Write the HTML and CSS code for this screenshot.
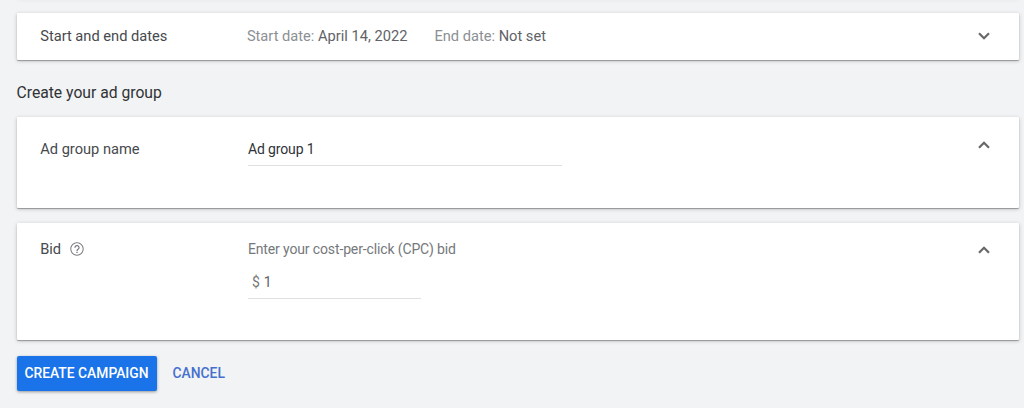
FILE: index.html
```html
<!DOCTYPE html>
<html lang="en">
<head>
    <meta charset="UTF-8">
    <meta name="viewport" content="width=device-width, initial-scale=1.0">
    <title>Create your ad group</title>
    <link rel="stylesheet" href="styles.css">
</head>
<body>

    <!-- Previous panel, scrolled out of view -->
    <div class="panel panel-prev"></div>

    <!-- Start and end dates -->
    <section class="panel panel-dates">
        <div class="label">Start and end dates</div>
        <div class="content dates">
            <span class="start">Start date: <b>April 14, 2022</b></span>
            <span class="end">End date: <b>Not set</b></span>
        </div>
        <svg class="chevron" viewBox="0 0 12 8"><path d="M1 1.2l5 5 5-5"/></svg>
    </section>

    <h2>Create your ad group</h2>

    <!-- Ad group name -->
    <section class="panel panel-name">
        <div class="label">Ad group name</div>
        <div class="content">
            <div class="field field-name">Ad group 1</div>
        </div>
        <svg class="chevron" viewBox="0 0 12 8"><path d="M1 6.8l5-5 5 5"/></svg>
    </section>

    <!-- Bid -->
    <section class="panel panel-bid">
        <div class="label">
            <span>Bid</span>
            <svg class="help" viewBox="0 0 24 24"><path d="M11 18h2v-2h-2v2zm1-16C6.480 2 2 6.480 2 12s4.480 10 10 10 10-4.480 10-10S17.520 2 12 2zm0 18.500c-4.690 0-8.500-3.810-8.500-8.500S7.310 3.500 12 3.500s8.500 3.810 8.500 8.500-3.810 8.500-8.500 8.500zM12 6c-2.210 0-4 1.790-4 4h1.800c0-1.210.99-2.200 2.200-2.200s2.200.99 2.200 2.200c0 2-3.100 1.750-3.100 5h1.800c0-2.250 3.100-2.500 3.100-5 0-2.210-1.790-4-4-4z"/></svg>
        </div>
        <div class="content">
            <div class="hint">Enter your cost-per-click (CPC) bid</div>
            <div class="field field-bid"><span class="currency">$</span>1</div>
        </div>
        <svg class="chevron" viewBox="0 0 12 8"><path d="M1 6.8l5-5 5 5"/></svg>
    </section>

    <!-- Actions -->
    <div class="actions">
        <button class="btn btn-primary">CREATE CAMPAIGN</button>
        <button class="btn btn-text">CANCEL</button>
    </div>

</body>
</html>
```
FILE: styles.css
```css
* {
    box-sizing: border-box;
}
body {
    margin: 0;
    padding: 0 5px 0 16.5px;
    height: 408px;
    overflow: hidden;
    background: #f1f3f4;
    color: #46494d;
    font-family: Roboto, "Liberation Sans", sans-serif;
    font-size: 14.65px;
    line-height: 20px;
}

/* Panels */
.panel {
    display: flex;
    align-items: flex-start;
    padding: 0 29px 0 23.7px;
    background: #fff;
    border-radius: 1px;
    box-shadow: 0 1px 1px rgba(0, 0, 0, .3), 0 1px 4px rgba(0, 0, 0, .2);
}
.panel-prev {
    height: 1px;
    margin-top: -3px;
    margin-bottom: 15px;
}
.panel-dates {
    height: 47px;
    padding-bottom: 1px;
    align-items: center;
}
.panel-name {
    height: 91px;
    padding-top: 22px;
}
.panel-bid {
    height: 117px;
    margin-top: 15px;
    padding-top: 16px;
}
.label {
    display: flex;
    align-items: center;
    gap: 8px;
    width: 207.7px;
}
.content {
    flex: 1;
}
.chevron {
    width: 12px;
    height: 8px;
    margin-top: 2px;
    fill: none;
    stroke: #686868;
    stroke-width: 2.2;
}
.panel-dates .chevron {
    margin-top: 0;
}
.panel-bid .chevron {
    margin-top: 7px;
}

/* Dates */
.dates {
    display: flex;
    gap: 27px;
    margin-left: -1px;
    color: #8c8f93;
}
.dates b {
    font-weight: 400;
    color: #5f6368;
}

h2 {
    margin: 23px 0 14px;
    color: #303236;
    font-size: 15.7px;
    font-weight: 400;
    line-height: 20px;
}

/* Fields */
.field,
.hint {
    font-size: 14px;
    letter-spacing: -.13px;
}
.field {
    border-bottom: 1px solid #e0e0e0;
    line-height: 22px;
}
.field-name {
    width: 314px;
    height: 28px;
    margin-top: -1px;
    color: #303236;
}
.hint {
    color: #75787c;
}
.field-bid {
    width: 173px;
    height: 28px;
    margin-top: 12px;
    padding-left: 4px;
    color: #5f6368;
}
.currency {
    margin-right: 4px;
    color: #75787c;
}
.help {
    width: 16px;
    height: 16px;
    fill: #75787c;
}

/* Buttons */
.actions {
    display: flex;
    gap: 16px;
    margin-top: 16px;
}
.btn {
    height: 35px;
    padding: 0 0 1px;
    border: 0;
    background: none;
    font-family: inherit;
    font-size: 13.85px;
    font-weight: 500;
    cursor: pointer;
}
.btn-primary {
    width: 140px;
    border-radius: 2px;
    background: #1a73e8;
    color: #fff;
    box-shadow: 0 1px 3px rgba(60, 64, 67, .5);
}
.btn-text {
    color: #4470cf;
}
```
